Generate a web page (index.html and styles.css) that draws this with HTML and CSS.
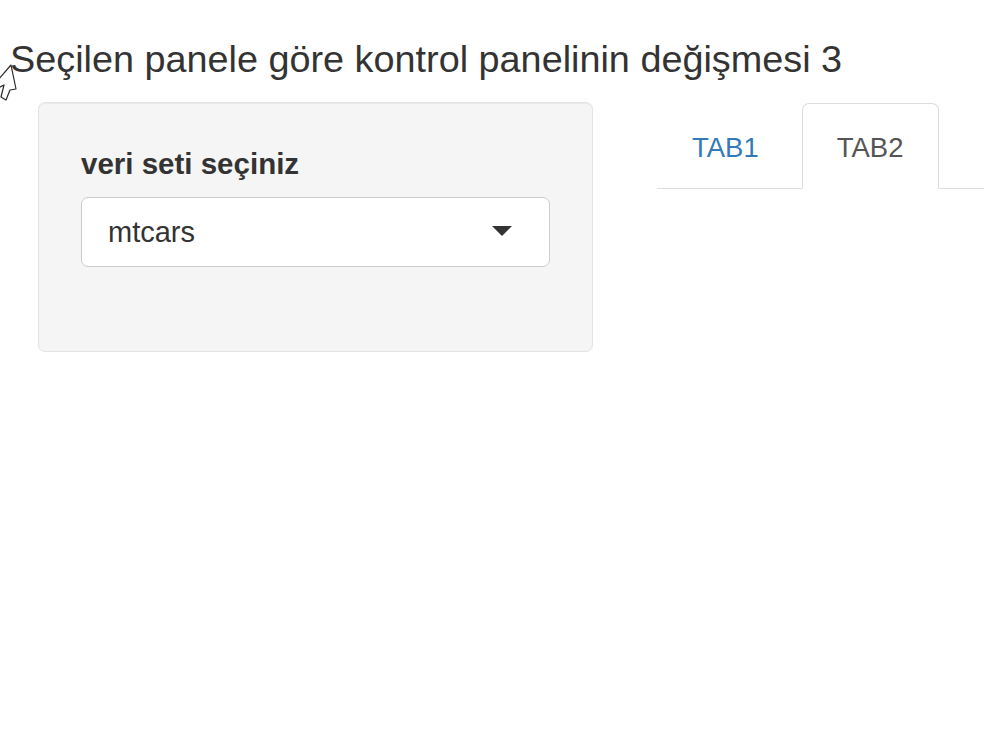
FILE: index.html
```html
<!DOCTYPE html>
<html lang="tr">
<head>
<meta charset="utf-8">
<title>Seçilen panele göre kontrol panelinin değişmesi 3</title>
<link rel="stylesheet" href="styles.css">
</head>
<body>
<div class="page">
  <h2 class="title">Seçilen panele göre kontrol panelinin değişmesi 3</h2>
  <div class="row">
    <div class="well">
      <label class="label">veri seti seçiniz</label>
      <div class="select">
        <span class="select-text">mtcars</span>
        <span class="caret"></span>
      </div>
    </div>
    <div class="main">
      <ul class="tabs">
        <li class="tab"><a class="tab-link">TAB1</a></li>
        <li class="tab active"><a class="tab-link">TAB2</a></li>
      </ul>
    </div>
  </div>
  <svg class="cursor" width="20" height="50" viewBox="0 0 20 50">
    <path d="M11 9 L-2 24 L-2 32 L4 29 L1 41 L6 44 L10 34 L16 33 Z" fill="#ffffff" stroke="#2a2a2a" stroke-width="1.2" stroke-linejoin="round"/>
  </svg>
</div>
</body>
</html>
```
FILE: styles.css
```css
html, body {
  margin: 0;
  padding: 0;
  background: #ffffff;
}
body {
  font-family: "Liberation Sans", Arial, Helvetica, sans-serif;
  color: #333333;
}
.page {
  position: relative;
  width: 984px;
  height: 752px;
  overflow: hidden;
}
.title {
  margin: 38px 0 0 10px;
  font-size: 37.8px;
  font-weight: 400;
  line-height: 42px;
  color: #333333;
  white-space: nowrap;
}
.row {
  display: flex;
  align-items: flex-start;
  margin-top: 22px;
  padding-left: 38px;
  gap: 64px;
}
.well {
  box-sizing: border-box;
  width: 555px;
  height: 250px;
  padding: 43px 42px 0 42px;
  background: #f5f5f5;
  border: 1px solid #e3e3e3;
  border-radius: 7px;
  box-shadow: inset 0 1px 1px rgba(0, 0, 0, 0.05);
  display: flex;
  flex-direction: column;
}
.label {
  font-size: 29.5px;
  font-weight: 700;
  line-height: 35px;
  color: #333333;
}
.select {
  box-sizing: border-box;
  margin-top: 16px;
  height: 70px;
  background: #ffffff;
  border: 1px solid #cccccc;
  border-radius: 7px;
  display: flex;
  align-items: center;
  padding: 0 37px 0 26px;
}
.select-text {
  flex: 1;
  font-size: 29px;
  line-height: 34px;
  color: #333333;
}
.caret {
  width: 0;
  height: 0;
  border-left: 10.5px solid transparent;
  border-right: 10.5px solid transparent;
  border-top: 10px solid #333333;
  margin-top: -2px;
}
.main {
  flex: 1;
  padding-top: 1px;
}
.tabs {
  list-style: none;
  margin: 0;
  padding: 0;
  display: flex;
  gap: 8px;
  border-bottom: 1px solid #dddddd;
}
.tab {
  margin-bottom: -1px;
  border: 1px solid transparent;
  border-radius: 7px 7px 0 0;
}
.tab.active {
  border-color: #dddddd;
  border-bottom-color: #ffffff;
  background: #ffffff;
}
.tab-link {
  display: block;
  padding: 29px 34px 25px 34px;
  font-size: 27.5px;
  line-height: 30px;
  color: #337ab7;
}
.tab.active .tab-link {
  color: #555555;
}
.cursor {
  position: absolute;
  left: 0;
  top: 56px;
}
```
